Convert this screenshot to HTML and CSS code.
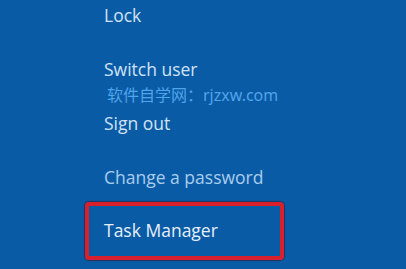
FILE: index.html
```html
<!DOCTYPE html>
<html lang="en">
<head>
<meta charset="utf-8">
<title>Ctrl+Alt+Del</title>
<link rel="stylesheet" href="styles.css">
</head>
<body>
<div class="screen">
  <ul class="menu">
    <li class="item">Lock</li>
    <li class="item">Switch user</li>
    <li class="item">Sign out</li>
    <li class="item dim">Change a password</li>
    <li class="item selected">Task Manager</li>
  </ul>
  <div class="watermark">软件自学网：rjzxw.com</div>
</div>
</body>
</html>
```
FILE: styles.css
```css
html, body {
  margin: 0;
  padding: 0;
}
body {
  background: #0a5ba6;
  width: 406px;
  height: 269px;
  overflow: hidden;
  font-family: "Open Sans", "Noto Sans", sans-serif;
}
.screen {
  position: relative;
  height: 269px;
}
.menu {
  list-style: none;
  margin: 0;
  padding: 5px 0 0 104px;
  display: flex;
  flex-direction: column;
  align-items: flex-start;
}
.item {
  font-size: 17.5px;
  line-height: 21px;
  color: #d0e3f5;
}
.item + .item {
  margin-top: 33px;
}
.item.dim {
  color: #a9cdee;
}
.item.selected {
  margin-top: 14px;
  margin-left: -19px;
  width: 176px;
  padding: 14px 0 15px 15px;
  border: 4px solid #d8202c;
  border-radius: 4px;
  color: #e6f0fa;
  box-shadow: 0 0 1px 1px rgba(60, 10, 30, 0.5);
}
.watermark {
  position: absolute;
  left: 107px;
  top: 85px;
  font-family: "Noto Sans", "Noto Sans CJK SC", sans-serif;
  font-size: 16px;
  line-height: 20px;
  color: #4fa4ea;
  white-space: nowrap;
}
```
